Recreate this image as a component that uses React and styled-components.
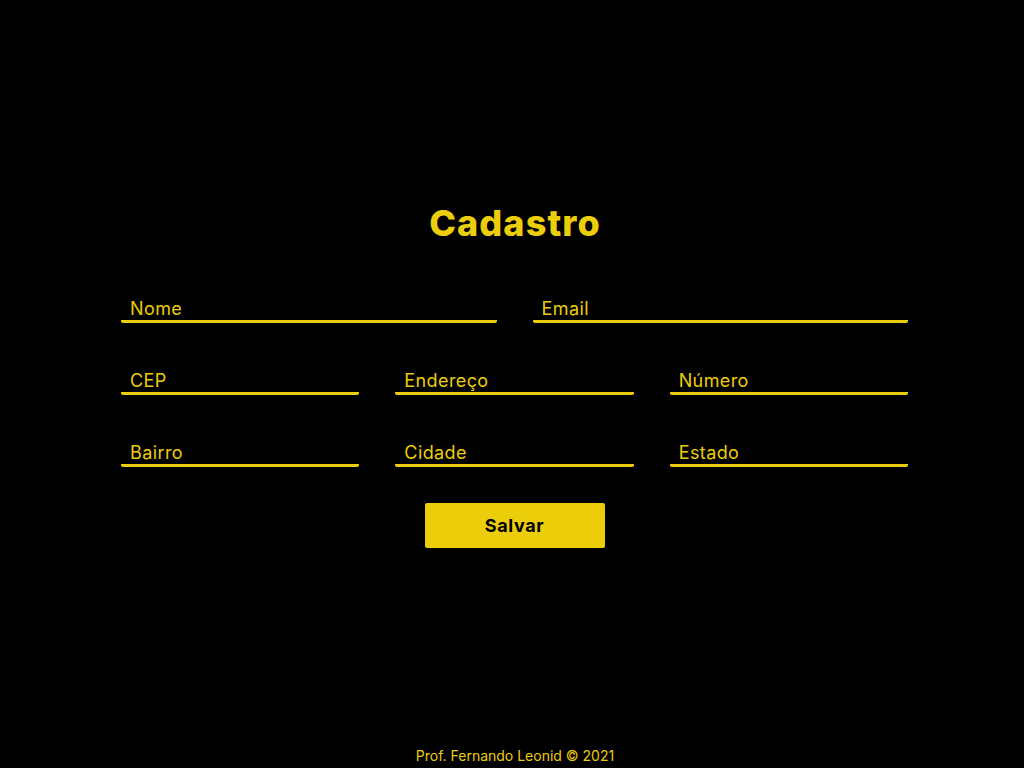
import React from "react";
import styled, { createGlobalStyle } from "styled-components";

const YELLOW = "#eccd0a";

const GlobalStyle = createGlobalStyle`
  html, body {
    margin: 0;
    padding: 0;
    background: #000;
    font-family: "Inter", "Noto Sans", sans-serif;
  }
  * { box-sizing: border-box; }
`;

const Page = styled.div`
  min-height: 768px;
  display: flex;
  flex-direction: column;
`;

const Main = styled.main`
  flex: 1;
  display: flex;
  flex-direction: column;
  align-items: center;
  padding-top: 200px;
`;

const Title = styled.h1`
  margin: 0 0 47px 6px;
  color: ${YELLOW};
  font-size: 36px;
  font-weight: 800;
  letter-spacing: 1.1px;
  line-height: 46px;
`;

const Form = styled.form`
  width: 787px;
  margin-left: 5px;
  display: flex;
  flex-direction: column;
  gap: 42px;
`;

const Row = styled.div`
  display: grid;
  grid-template-columns: repeat(${(p) => p.cols}, 1fr);
  column-gap: 36px;
`;

const Field = styled.input`
  width: 100%;
  height: 30px;
  background: transparent;
  border: none;
  border-bottom: 3px solid ${YELLOW};
  border-radius: 2px;
  padding: 4px 9px 0;
  color: ${YELLOW};
  font-family: inherit;
  font-size: 18px;
  letter-spacing: 0.4px;
  outline: none;
  &::placeholder {
    color: ${YELLOW};
    opacity: 1;
  }
`;

const Button = styled.button`
  align-self: center;
  margin-top: -6px;
  width: 180px;
  height: 45px;
  border: none;
  border-radius: 2px;
  background: ${YELLOW};
  color: #000;
  font-family: inherit;
  font-size: 18px;
  font-weight: 700;
  letter-spacing: 0.6px;
  cursor: pointer;
`;

const Footer = styled.footer`
  text-align: center;
  color: ${YELLOW};
  font-size: 14px;
  padding: 0 0 2px 6px;
  line-height: 20px;
`;

export default function App() {
  return (
    <Page>
      <GlobalStyle />
      <Main>
        <Title>Cadastro</Title>
        <Form onSubmit={(e) => e.preventDefault()}>
          <Row cols={2}>
            <Field placeholder="Nome" />
            <Field placeholder="Email" />
          </Row>
          <Row cols={3}>
            <Field placeholder="CEP" />
            <Field placeholder="Endereço" />
            <Field placeholder="Número" />
          </Row>
          <Row cols={3}>
            <Field placeholder="Bairro" />
            <Field placeholder="Cidade" />
            <Field placeholder="Estado" />
          </Row>
          <Button type="submit">Salvar</Button>
        </Form>
      </Main>
      <Footer>Prof. Fernando Leonid © 2021</Footer>
    </Page>
  );
}
